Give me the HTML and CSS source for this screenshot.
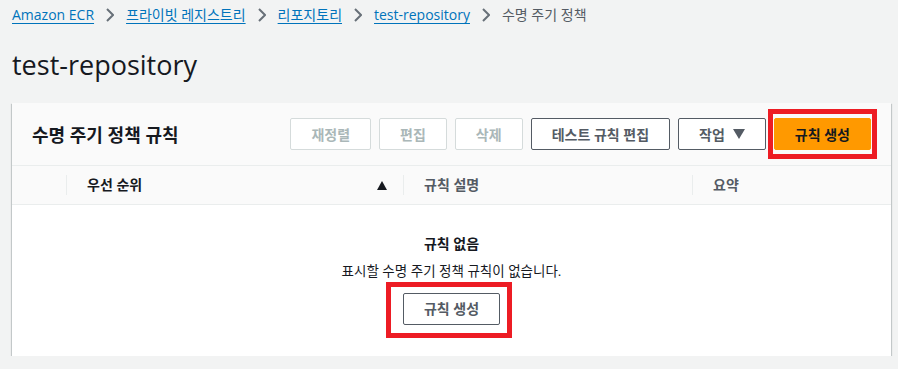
FILE: index.html
```html
<!DOCTYPE html>
<html lang="ko">
<head>
  <meta charset="UTF-8" />
  <meta name="viewport" content="width=device-width, initial-scale=1.0"/>
  <title>test-repository - 수명 주기 정책</title>
  <link rel="stylesheet" href="styles.css">
</head>
<body>

<!-- BREADCRUMBS -->
<nav class="crumbs">
  <a href="#">Amazon ECR</a>
  <svg class="crumb-sep" width="8" height="14" viewBox="0 0 8 14"><polyline points="1,1 7,7 1,13" /></svg>
  <a href="#">프라이빗 레지스트리</a>
  <svg class="crumb-sep" width="8" height="14" viewBox="0 0 8 14"><polyline points="1,1 7,7 1,13" /></svg>
  <a href="#">리포지토리</a>
  <svg class="crumb-sep" width="8" height="14" viewBox="0 0 8 14"><polyline points="1,1 7,7 1,13" /></svg>
  <a href="#">test-repository</a>
  <svg class="crumb-sep" width="8" height="14" viewBox="0 0 8 14"><polyline points="1,1 7,7 1,13" /></svg>
  <span class="crumb-current">수명 주기 정책</span>
</nav>

<h1 class="page-title">test-repository</h1>

<!-- LIFECYCLE RULES PANEL -->
<section class="panel">
  <div class="panel-head">
    <h2>수명 주기 정책 규칙</h2>
    <div class="actions">
      <button class="btn" disabled>재정렬</button>
      <button class="btn" disabled>편집</button>
      <button class="btn" disabled>삭제</button>
      <button class="btn">테스트 규칙 편집</button>
      <button class="btn">작업 <span class="caret-down"></span></button>
      <span class="marked marked-head"><button class="btn btn-primary">규칙 생성</button></span>
    </div>
  </div>

  <div class="table-head">
    <div class="col col-select"></div>
    <div class="col col-sorted">우선 순위 <span class="caret-up"></span></div>
    <div class="col">규칙 설명</div>
    <div class="col">요약</div>
  </div>

  <div class="empty">
    <b>규칙 없음</b>
    <p>표시할 수명 주기 정책 규칙이 없습니다.</p>
    <span class="marked marked-empty"><button class="btn">규칙 생성</button></span>
  </div>
</section>

</body>
</html>
```

FILE: styles.css
```css
body {
  margin: 0;
  padding: 5px 7px 0 12px;
  font-family: "Open Sans", "Noto Sans CJK KR", sans-serif;
  font-size: 13px;
  background: #f2f3f3;
  color: #16191f;
}

/* Breadcrumbs */
.crumbs {
  display: flex;
  align-items: center;
  gap: 12px;
  font-size: 14px;
  line-height: 20px;
}
.crumbs a {
  color: #0073bb;
  text-decoration: underline;
  text-underline-offset: 3px;
}
.crumb-sep polyline {
  fill: none;
  stroke: #687078;
  stroke-width: 2;
}
.crumb-current {
  color: #545b64;
}

.page-title {
  margin: 23px 0 21px;
  font-size: 27px;
  font-weight: 400;
  line-height: 34px;
}

/* Panel */
.panel {
  background: #ffffff;
  box-shadow: 0 1px 1px 0 rgba(0,28,36,0.3), 1px 1px 1px 0 rgba(0,28,36,0.15), -1px 1px 1px 0 rgba(0,28,36,0.15);
}
.panel-head {
  display: flex;
  justify-content: space-between;
  align-items: center;
  padding: 15px 20px;
  background: #fafafa;
  border-bottom: 1px solid #eaeded;
}
.panel-head h2 {
  margin: 0;
  font-size: 18px;
  font-weight: 700;
}
.actions {
  display: flex;
  align-items: center;
  gap: 8px;
}

/* Buttons */
.btn {
  display: inline-flex;
  align-items: center;
  gap: 8px;
  height: 32px;
  padding: 0 20px;
  border: 1px solid #545b64;
  border-radius: 2px;
  background: #ffffff;
  color: #545b64;
  font: inherit;
  font-size: 14px;
  font-weight: 700;
  cursor: pointer;
}
.btn:disabled {
  border-color: #d5dbdb;
  color: #aab7b8;
  cursor: default;
}
.btn-primary {
  background: #ff9900;
  border-color: #ff9900;
  color: #16191f;
}
.caret-down {
  width: 0;
  height: 0;
  border-left: 6px solid transparent;
  border-right: 6px solid transparent;
  border-top: 10px solid #545b64;
}

/* Red annotation frames */
.marked {
  position: relative;
  display: inline-flex;
}
.marked::after {
  content: "";
  position: absolute;
  border: 5px solid #ed1c24;
  pointer-events: none;
}
.marked-head::after {
  top: -9px;
  bottom: -9px;
  left: -6px;
  right: -6px;
}
.marked-empty::after {
  top: -11px;
  bottom: -13px;
  left: -17px;
  right: -12px;
}

/* Table header */
.table-head {
  display: grid;
  grid-template-columns: 54px 337px 289px 1fr;
  align-items: center;
  padding: 9px 0;
  background: #fafafa;
  border-bottom: 1px solid #eaeded;
  color: #545b64;
  font-size: 14px;
  font-weight: 700;
  line-height: 20px;
}
.col {
  padding: 0 20px;
  border-left: 1px solid #eaeded;
}
.col-select {
  height: 20px;
  border-left: none;
}
.col-sorted {
  display: flex;
  justify-content: space-between;
  align-items: center;
  padding-right: 16px;
  color: #16191f;
}
.caret-up {
  width: 0;
  height: 0;
  border-left: 5px solid transparent;
  border-right: 5px solid transparent;
  border-bottom: 9px solid #16191f;
}

/* Empty state */
.empty {
  display: flex;
  flex-direction: column;
  align-items: center;
  padding: 29px 20px 31px;
  line-height: 20px;
}
.empty b {
  font-size: 14px;
}
.empty p {
  margin: 7px 0 12px;
  font-size: 13.5px;
}
```
